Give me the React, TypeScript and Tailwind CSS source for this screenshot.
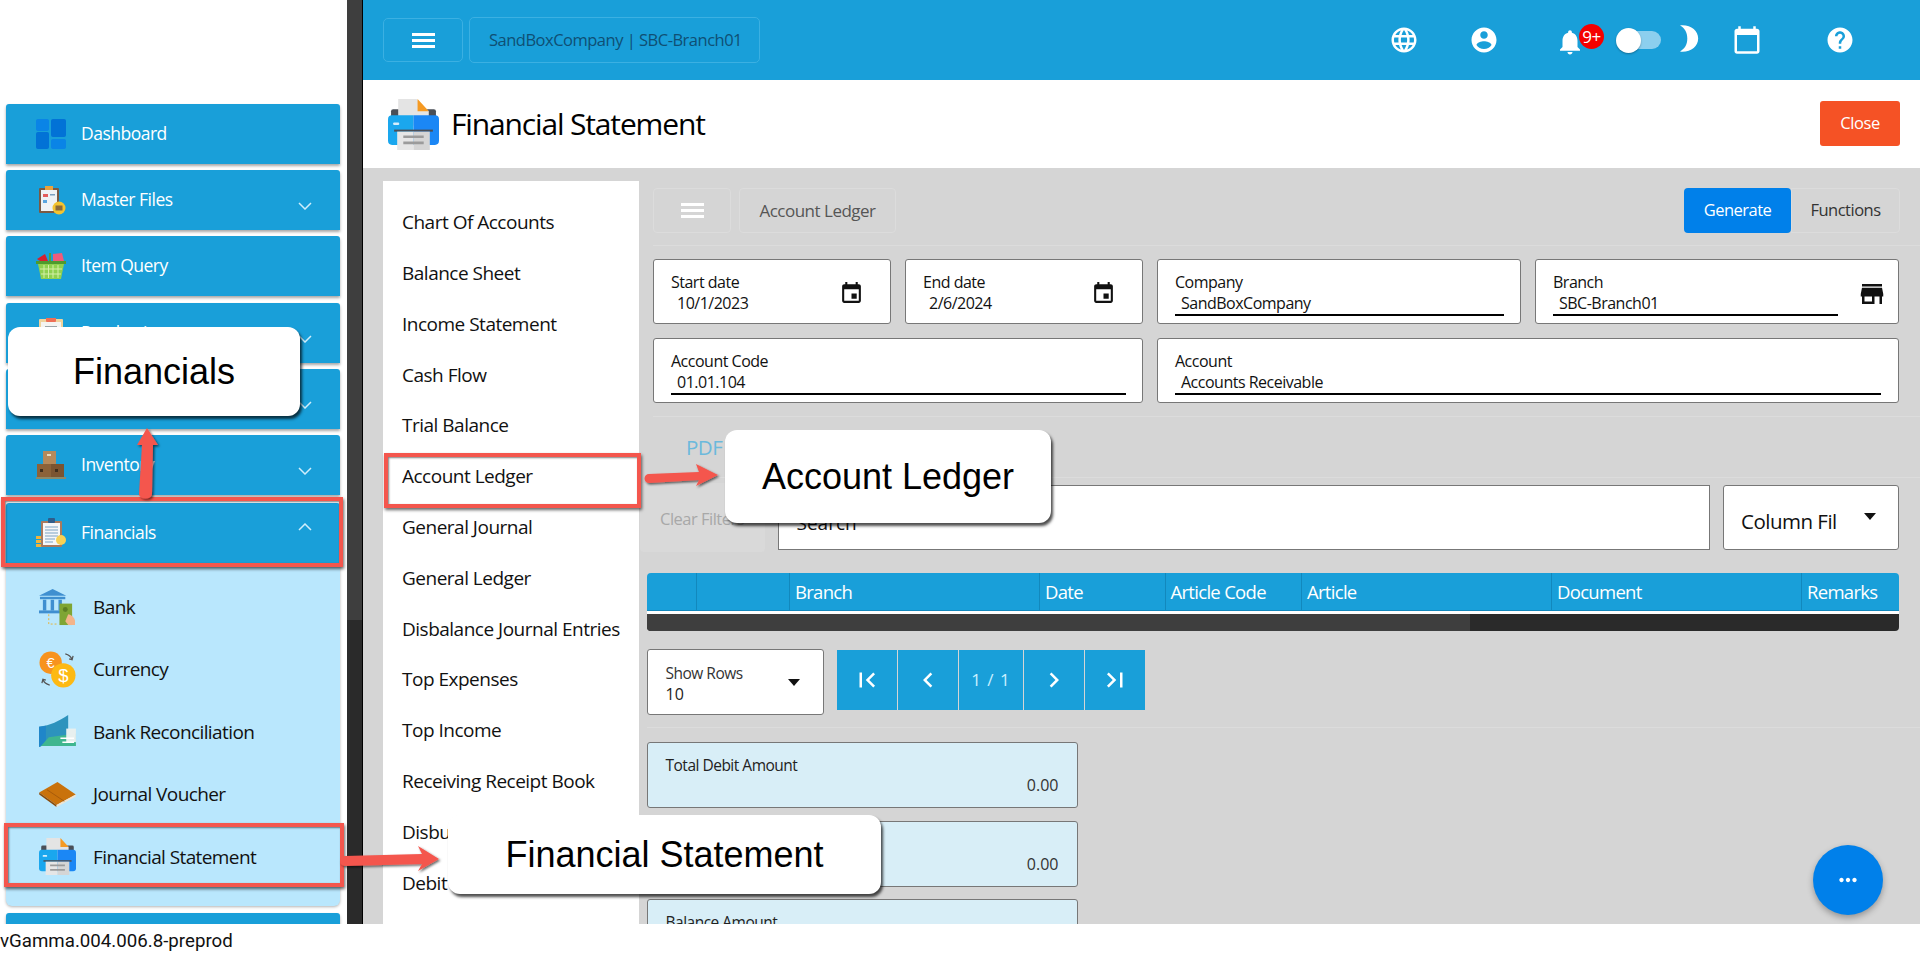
import type { ReactNode } from "react";

const FONT = "font-['Open_Sans',sans-serif]";

function Mi({ d, className = "" }: { d: string; className?: string }) {
  return (
    <svg viewBox="0 0 24 24" fill="currentColor" className={className}>
      <path d={d} />
    </svg>
  );
}

const P = {
  globe: "M11.99 2C6.47 2 2 6.48 2 12s4.47 10 9.99 10C17.52 22 22 17.52 22 12S17.52 2 11.99 2zm6.93 6h-2.95c-.32-1.25-.78-2.45-1.38-3.56 1.84.63 3.37 1.91 4.33 3.56zM12 4.04c.83 1.2 1.48 2.53 1.91 3.96h-3.82c.43-1.43 1.08-2.76 1.91-3.96zM4.26 14C4.1 13.36 4 12.69 4 12s.1-1.36.26-2h3.38c-.08.66-.14 1.32-.14 2 0 .68.06 1.34.14 2H4.26zm.82 2h2.95c.32 1.25.78 2.45 1.38 3.56-1.84-.63-3.37-1.9-4.33-3.56zm2.95-8H5.08c.96-1.66 2.49-2.93 4.33-3.56C8.81 5.55 8.35 6.75 8.03 8zM12 19.96c-.83-1.2-1.48-2.53-1.91-3.96h3.82c-.43 1.43-1.08 2.76-1.91 3.96zM14.34 14H9.66c-.09-.66-.16-1.32-.16-2 0-.68.07-1.35.16-2h4.68c.09.65.16 1.32.16 2 0 .68-.07 1.34-.16 2zm.25 5.56c.6-1.11 1.06-2.31 1.38-3.56h2.95c-.96 1.65-2.49 2.93-4.33 3.56zM16.36 14c.08-.66.14-1.32.14-2 0-.68-.06-1.34-.14-2h3.38c.16.64.26 1.31.26 2s-.1 1.36-.26 2h-3.38z",
  account: "M12 2C6.48 2 2 6.48 2 12s4.48 10 10 10 10-4.48 10-10S17.52 2 12 2zm0 3c1.66 0 3 1.34 3 3s-1.34 3-3 3-3-1.34-3-3 1.34-3 3-3zm0 14.2c-2.5 0-4.71-1.28-6-3.22.03-1.99 4-3.08 6-3.08 1.99 0 5.97 1.09 6 3.08-1.29 1.94-3.5 3.22-6 3.22z",
  bell: "M12 22c1.1 0 2-.9 2-2h-4c0 1.1.89 2 2 2zm6-6v-5c0-3.07-1.64-5.64-4.5-6.32V4c0-.83-.67-1.5-1.5-1.5s-1.5.67-1.5 1.5v.68C7.63 5.36 6 7.92 6 11v5l-2 2v1h16v-1l-2-2z",
  help: "M12 2C6.48 2 2 6.48 2 12s4.48 10 10 10 10-4.48 10-10S17.52 2 12 2zm1 17h-2v-2h2v2zm2.07-7.75l-.9.92C13.45 12.9 13 13.5 13 15h-2v-.5c0-1.1.45-2.1 1.17-2.83l1.24-1.26c.37-.36.59-.86.59-1.41 0-1.1-.9-2-2-2s-2 .9-2 2H8c0-2.21 1.79-4 4-4s4 1.79 4 4c0 .88-.36 1.68-.93 2.25z",
  calendar: "M20 3h-1V1h-2v2H7V1H5v2H4c-1.1 0-2 .9-2 2v16c0 1.1.9 2 2 2h16c1.1 0 2-.9 2-2V5c0-1.1-.9-2-2-2zm0 18H4V8h16v13z",
  event: "M17 12h-5v5h5v-5zM16 1v2H8V1H6v2H5c-1.11 0-1.99.9-1.99 2L3 19c0 1.1.89 2 2 2h14c1.1 0 2-.9 2-2V5c0-1.1-.9-2-2-2h-1V1h-2zm3 18H5V8h14v11z",
  store: "M20 4H4v2h16V4zm1 10v-2l-1-5H4l-1 5v2h1v6h10v-6h4v6h2v-6h1zm-9 4H6v-4h6v4z",
  first: "M18.41 16.59L13.82 12l4.59-4.59L17 6l-6 6 6 6zM6 6h2v12H6z",
  last: "M5.59 7.41L10.18 12l-4.59 4.59L7 18l6-6-6-6zM16 6h2v12h-2z",
  prev: "M15.41 7.41L14 6l-6 6 6 6 1.41-1.41L10.83 12z",
  next: "M10 6L8.59 7.41 13.17 12l-4.58 4.59L10 18l6-6z",
  dots: "M6 10c-1.1 0-2 .9-2 2s.9 2 2 2 2-.9 2-2-.9-2-2-2zm12 0c-1.1 0-2 .9-2 2s.9 2 2 2 2-.9 2-2-.9-2-2-2zm-6 0c-1.1 0-2 .9-2 2s.9 2 2 2 2-.9 2-2-.9-2-2-2z",
  moon: "M7 1c7.500 0 13 4.800 13 11s-5.500 11-13 11c-.8 0-1.500-.1-2-.3 4-2.200 6-5.800 6-10.700S9 3.500 5 1.300C5.500 1.100 6.200 1 7 1z",
};

function Burger({ className = "" }: { className?: string }) {
  return (
    <div className={`flex flex-col gap-[3px] w-[23px] ${className}`}>
      <div className="h-[3px] bg-white" />
      <div className="h-[3px] bg-white" />
      <div className="h-[3px] bg-white" />
    </div>
  );
}

function DashIcon() {
  return (
    <svg viewBox="0 0 30 30" className="w-[30px] h-[30px]">
      <rect x="0" y="0" width="13" height="12" rx="2" fill="#0a84e6" />
      <rect x="15" y="0" width="15" height="18" rx="2" fill="#0272d6" />
      <rect x="0" y="13" width="13" height="17" rx="2" fill="#0272d6" />
      <rect x="15" y="20" width="15" height="10" rx="2" fill="#0a84e6" />
    </svg>
  );
}

function MasterIcon() {
  return (
    <svg viewBox="0 0 30 30" className="w-[30px] h-[30px]">
      <rect x="3" y="3" width="20" height="25" rx="1" fill="#7a5a44" />
      <rect x="5" y="5" width="16" height="21" fill="#eef2f5" />
      <rect x="9" y="1" width="8" height="4" fill="#e9a23b" />
      <rect x="7" y="9" width="5" height="3" fill="#e35d5d" />
      <rect x="14" y="9" width="5" height="1.500" fill="#7aa0c0" />
      <rect x="7" y="15" width="4" height="3" fill="#59a5df" />
      <circle cx="23" cy="23" r="6.500" fill="#f4c430" />
      <rect x="19.500" y="20.500" width="7" height="5" fill="#8a6a3a" />
    </svg>
  );
}

function PurchIcon() {
  return (
    <svg viewBox="0 0 30 30" className="w-[30px] h-[30px]">
      <rect x="3" y="1" width="24" height="29" rx="1" fill="#f0d39c" />
      <rect x="5" y="4" width="20" height="24" fill="#f4f4f2" />
      <rect x="10" y="-1" width="10" height="5" rx="1" fill="#ee6f57" />
      <path d="M9 9h12M9 13h12M9 17h12M9 21h8" stroke="#7e8a90" strokeWidth="1.500" />
    </svg>
  );
}

function BasketIcon() {
  return (
    <svg viewBox="0 0 30 30" className="w-[30px] h-[30px]">
      <path d="M1 8l8-5 3 7H4z" fill="#d6202f" />
      <path d="M17 3l9-1 2 8H17z" fill="#ef5b7b" />
      <rect x="13" y="2" width="2" height="9" fill="#5a9a3a" />
      <rect x="0" y="10" width="30" height="3" fill="#4e9a2e" />
      <path d="M2 13h26l-3 15H5z" fill="#8fd14f" />
      <path d="M8 14v13M12.500 14v13M17 14v13M22 14v13M4 18h22M5 23h20" stroke="#d4efa8" strokeWidth="1" />
    </svg>
  );
}

function BoxIcon() {
  return (
    <svg viewBox="0 0 30 30" className="w-[30px] h-[30px]">
      <rect x="7" y="1" width="13" height="13" fill="#b58a5c" />
      <rect x="1" y="14" width="14" height="13" fill="#8c6239" />
      <rect x="15" y="14" width="13" height="13" fill="#7b5431" />
      <rect x="0" y="27" width="30" height="2" fill="#8c8a6a" />
      <rect x="11" y="4" width="4" height="2" fill="#e8dcc0" />
      <rect x="4" y="19" width="3" height="3" fill="#3f2d1c" />
      <rect x="19" y="19" width="3" height="3" fill="#3f2d1c" />
    </svg>
  );
}

function ClipboardIcon() {
  return (
    <svg viewBox="0 0 30 30" className="w-[30px] h-[30px]">
      <rect x="0" y="18" width="6" height="3" fill="#f0b43c" />
      <rect x="0" y="22" width="6" height="3" fill="#f0b43c" />
      <rect x="0" y="26" width="6" height="3" fill="#f0b43c" />
      <rect x="5" y="3" width="21" height="26" rx="1" fill="#a97a5e" />
      <rect x="7" y="5" width="17" height="22" fill="#f5f7f9" />
      <rect x="12" y="0" width="7" height="5" rx="1" fill="#2f5d8a" />
      <path d="M9 9h13M9 12h13M9 15h13M9 18h13M9 21h10M9 24h8" stroke="#7da3c4" strokeWidth="1.200" />
      <circle cx="25" cy="22" r="5" fill="#f7d154" />
    </svg>
  );
}

function BankIcon() {
  return (
    <svg viewBox="0 0 38 38" className="w-[37px] h-[37px]">
      <path d="M14 0L28 7H0z" fill="#3f8fd0" />
      <rect x="1" y="8" width="26" height="2.500" fill="#3f8fd0" />
      <path d="M4 11h3.500v11H4zM12 11h3.500v11H12zM20 11h3.500v11H20z" fill="#3f8fd0" />
      <rect x="0" y="22" width="27" height="3" fill="#3f8fd0" />
      <path d="M10 26v10h10" stroke="#e7b53c" strokeWidth="1" strokeDasharray="2 2" fill="none" />
      <rect x="21" y="15" width="13" height="22" fill="#7fa534" />
      <circle cx="27" cy="21" r="2.500" fill="#5d7f25" />
      <path d="M30 26c3 0 7 4 7 7v4h-7l-3-4z" fill="#f3b48a" />
    </svg>
  );
}

function CurrencyIcon() {
  return (
    <svg viewBox="0 0 38 38" className="w-[37px] h-[37px]">
      <circle cx="12" cy="12" r="11.500" fill="#f7931e" />
      <circle cx="25" cy="25" r="12.500" fill="#fdb913" />
      <text x="12" y="17" textAnchor="middle" fontSize="15" fill="#fff" fontFamily="Liberation Sans">€</text>
      <text x="25" y="32" textAnchor="middle" fontSize="19" fill="#fff" fontFamily="Liberation Sans">$</text>
      <path d="M27 3c4 1 6 3 7 6M31 8l3 1 1-4M11 35c-4-1-6-3-7-6M7 30l-3-1-1 4" stroke="#555" strokeWidth="1.300" fill="none" />
    </svg>
  );
}

function ReconIcon() {
  return (
    <svg viewBox="0 0 38 34" className="w-[37px] h-[33px]">
      <path d="M0 12c12-1 20-6 30-12v21c-10 4-20 8-30 12z" fill="#2d93bd" />
      <path d="M0 12c4 0 6-1 7-1v19l-7 3z" fill="#1f86c9" />
      <path d="M10 23l28-4v13H2z" fill="#3fb68f" />
      <rect x="28" y="14" width="10" height="14" fill="#e8f0ef" />
      <path d="M22 24h14M24 28h12" stroke="#fff" strokeWidth="1.500" />
    </svg>
  );
}

function BookIcon() {
  return (
    <svg viewBox="0 0 38 26" className="w-[37px] h-[25px]">
      <path d="M0 11L19 0l19 13-20 11z" fill="#c9720c" />
      <path d="M0 11l18 13v2L0 13z" fill="#8a4a08" />
      <path d="M18 24l20-11v2L18 26z" fill="#f0e4d0" />
      <path d="M8 8l18 12" stroke="#a55a0a" strokeWidth="1" />
    </svg>
  );
}

function PrinterIcon({ className = "" }: { className?: string }) {
  return (
    <svg viewBox="0 0 50 50" className={className}>
      <path d="M3 24V12a2 2 0 012-2h40a2 2 0 012 2v12z" fill="#4a4f57" />
      <path d="M10 0h18l12 12v14H10z" fill="#e4e4e4" />
      <path d="M29 0l11 12H29z" fill="#f59a23" />
      <path d="M4 16h21v29H4a4 4 0 01-4-4V20a4 4 0 014-4z" fill="#1aa7ee" />
      <path d="M25 16h21a4 4 0 014 4v21a4 4 0 01-4 4H25z" fill="#1b87f5" />
      <rect x="6" y="30" width="38" height="2" fill="#4a4f57" />
      <rect x="5" y="23" width="6" height="2.500" rx="1" fill="#d5eefc" />
      <rect x="9" y="32" width="16" height="18" fill="#e6e6e6" />
      <rect x="25" y="32" width="16" height="18" fill="#d5d5d5" />
      <path d="M15 37h20M15 43h20" stroke="#9b9b9b" strokeWidth="2.500" />
    </svg>
  );
}

function NavItem({ label, icon, chevron, className = "" }: { label: string; icon?: ReactNode; chevron?: "up" | "down"; className?: string }) {
  return (
    <div className={`h-[60px] shrink-0 bg-[#199fd9] rounded-t-[3px] shadow-[0_2px_3px_rgba(0,0,0,0.35)] flex items-center ml-[6px] w-[334px] relative ${className}`}>
      <div className="w-[30px] h-[30px] ml-[30px] mr-[15px] flex items-center justify-center">{icon}</div>
      <span className="text-[17.500px] text-white tracking-[-0.5px] pb-[2px]">{label}</span>
      {chevron === "down" && (
        <svg viewBox="0 0 14 8" className="absolute right-[28px] top-[32px] w-[14px] h-[8px]" fill="none" stroke="#cfeefc" strokeWidth="1.500"><path d="M1 1l6 6 6-6" /></svg>
      )}
      {chevron === "up" && (
        <svg viewBox="0 0 14 8" className="absolute right-[28px] top-[20px] w-[14px] h-[8px]" fill="none" stroke="#cfeefc" strokeWidth="1.500"><path d="M1 7l6-6 6 6" /></svg>
      )}
    </div>
  );
}

function SubItem({ label, icon }: { label: string; icon: ReactNode }) {
  return (
    <div className="h-[62.400px] flex items-center pl-[33px]">
      <div className="w-[37px] flex justify-center">{icon}</div>
      <span className="ml-[17px] text-[19px] text-[#111] tracking-[-0.6px]">{label}</span>
    </div>
  );
}

function Field({ label, value, w, icon, iconClass = "right-[26px] top-[21px] w-[25px] h-[25px]", line, lineW }: { label: string; value: string; w: string; icon?: string; iconClass?: string; line?: boolean; lineW?: string }) {
  return (
    <div className={`${w} h-[65px] bg-white border border-[#777] rounded-[3px] relative pl-[17px] pt-[12px] shrink-0`}>
      <div className="text-[16px] leading-[21px] text-[#111] tracking-[-0.5px]">{label}</div>
      <div className={`text-[16px] leading-[20px] text-[#111] pl-[6px] tracking-[-0.5px] ${line ? `border-b-2 border-black pb-[1px] ${lineW}` : ""}`}>{value}</div>
      {icon && <Mi d={icon} className={`absolute text-[#111] ${iconClass}`} />}
    </div>
  );
}

const MENU = [
  "Chart Of Accounts",
  "Balance Sheet",
  "Income Statement",
  "Cash Flow",
  "Trial Balance",
  "Account Ledger",
  "General Journal",
  "General Ledger",
  "Disbalance Journal Entries",
  "Top Expenses",
  "Top Income",
  "Receiving Receipt Book",
  "Disbursement Book",
  "Debit Memo Book",
  "Sales Service Book",
];

const COLS = [
  { w: "w-[49px]", t: "" },
  { w: "w-[93px]", t: "" },
  { w: "w-[250px]", t: "Branch" },
  { w: "w-[125.500px]", t: "Date" },
  { w: "w-[136.500px]", t: "Article Code" },
  { w: "w-[250px]", t: "Article" },
  { w: "w-[250px]", t: "Document" },
  { w: "flex-1", t: "Remarks" },
];

function Amount({ label, className = "" }: { label: string; className?: string }) {
  return (
    <div className={`w-[431px] h-[66px] shrink-0 bg-[#d8eef7] border border-[#777] rounded-[3px] pl-[18px] pr-[18px] pt-[12px] ${className}`}>
      <div className="text-[15.500px] leading-[21px] text-[#222] tracking-[-0.5px]">{label}</div>
      <div className="text-[16px] leading-[21px] -mt-[1px] text-right text-[#333]">0.00</div>
    </div>
  );
}

function PageCell({ w, children }: { w: string; children: ReactNode }) {
  return <div className={`${w} h-[60px] bg-[#199fd9] text-white flex items-center justify-center`}>{children}</div>;
}

function Callout({ text, className }: { text: string; className: string }) {
  return (
    <div className={`absolute bg-white rounded-[12px] shadow-[2px_3px_3px_rgba(0,0,0,0.7)] flex items-center justify-center font-['Liberation_Sans',sans-serif] text-[36px] text-black z-30 ${className}`}>
      {text}
    </div>
  );
}

function RedBox({ className }: { className: string }) {
  return <div className={`absolute border-[4.500px] border-[#f4564d] shadow-[1px_2px_3px_rgba(0,0,0,0.6),inset_1px_1px_2px_rgba(0,0,0,0.5)] z-20 ${className}`} />;
}

export default function App() {
  return (
    <div className={`relative w-[1920px] h-[953px] overflow-hidden bg-white ${FONT}`}>
      <div className="flex h-[924px] overflow-hidden">
        {/* sidebar */}
        <aside className="w-[347px] shrink-0 pt-[104px] flex flex-col gap-[6px] bg-white">
          <NavItem label="Dashboard" icon={<DashIcon />} />
          <NavItem label="Master Files" icon={<MasterIcon />} chevron="down" />
          <NavItem label="Item Query" icon={<BasketIcon />} />
          <NavItem label="Purchasing" icon={<PurchIcon />} chevron="down" className="mt-px" />
          <NavItem label="Sales" icon={<MasterIcon />} chevron="down" />
          <NavItem label="Inventory" icon={<BoxIcon />} chevron="down" />
          <div className="flex flex-col mt-[2px]">
            <NavItem label="Financials" icon={<ClipboardIcon />} chevron="up" />
            <div className="ml-[6px] w-[334px] h-[343px] bg-[#b9e7fd] rounded-b-[6px] shadow-[0_1px_3px_rgba(0,0,0,0.3)] pt-[13px]">
              <SubItem label="Bank" icon={<BankIcon />} />
              <SubItem label="Currency" icon={<CurrencyIcon />} />
              <SubItem label="Bank Reconciliation" icon={<ReconIcon />} />
              <SubItem label="Journal Voucher" icon={<BookIcon />} />
              <SubItem label="Financial Statement" icon={<PrinterIcon className="w-[37px] h-[37px]" />} />
            </div>
          </div>
          <NavItem label="" className="mt-px" />
        </aside>

        {/* page scrollbar */}
        <div className="w-[16px] shrink-0 bg-[#2a2a2a] border-r border-black flex flex-col">
          <div className="h-[620px] bg-[#3e3e3e]" />
        </div>

        <main className="flex-1 min-w-0 flex flex-col">
          <header className="h-[80px] shrink-0 bg-[#199fd9] flex items-center pl-[20px] relative">
            <div className="w-[80px] h-[44px] rounded-[5px] border border-[#3bb0e2] flex items-center justify-center">
              <Burger />
            </div>
            <div className="ml-[6px] w-[291px] h-[46px] rounded-[5px] border border-[#3bb0e2] flex items-center pl-[19px] text-[16.500px] text-[#0f4f74] tracking-[-0.5px]">
              SandBoxCompany | SBC-Branch01
            </div>
            <Mi d={P.globe} className="absolute left-[1026px] top-[25px] w-[30px] h-[30px] text-white" />
            <Mi d={P.account} className="absolute left-[1106px] top-[25px] w-[30px] h-[30px] text-white" />
            <Mi d={P.bell} className="absolute left-[1192px] top-[27px] w-[30px] h-[30px] text-white" />
            <div className="absolute left-[1216px] top-[24px] w-[25px] h-[25px] rounded-full bg-[#f50000] text-white text-[17px] tracking-[-0.5px] flex items-center justify-center">9+</div>
            <div className="absolute left-[1263px] top-[31px] w-[35px] h-[18px] rounded-full bg-[#8ccfee]" />
            <div className="absolute left-[1253px] top-[28px] w-[25px] h-[25px] rounded-full bg-white shadow-[0_1px_2px_rgba(0,0,0,0.3)]" />
            <Mi d={P.moon} className="absolute left-[1311px] top-[24px] w-[29px] h-[29px] text-white" />
            <Mi d={P.calendar} className="absolute left-[1369px] top-[25px] w-[30px] h-[30px] text-white" />
            <Mi d={P.help} className="absolute left-[1462px] top-[25px] w-[30px] h-[30px] text-white" />
          </header>

          <div className="h-[88px] shrink-0 bg-white flex items-center pl-[25px] pr-[20px]">
            <PrinterIcon className="w-[51px] h-[51px]" />
            <h1 className="ml-[12px] mt-[-2px] text-[30px] text-black tracking-[-1.15px]">Financial Statement</h1>
            <button className="ml-auto mt-[-1px] w-[80px] h-[45px] rounded-[3px] bg-[#f55225] text-white text-[16.500px] tracking-[-0.4px]">Close</button>
          </div>

          <div className="flex-1 min-h-0 bg-[#d5d5d5] flex pl-[20px] pt-[13px]">
            <nav className="w-[256px] shrink-0 bg-white pt-[16px] h-[800px]">
              {MENU.map((m) => (
                <div key={m} className="h-[50.800px] flex items-center pl-[19px] text-[19px] text-[#111] tracking-[-0.5px] whitespace-nowrap">{m}</div>
              ))}
            </nav>

            <section className="flex-1 min-w-0 pl-[14px]">
              {/* toolbar */}
              <div className="flex items-start h-[65px] pt-[7px] pr-[20px] border-b border-[#dcdcdc]">
                <div className="w-[78px] h-[45px] rounded-[4px] border border-[#dcdcdc] flex items-center justify-center">
                  <Burger />
                </div>
                <div className="ml-[8px] w-[157px] h-[45px] rounded-[4px] border border-[#dcdcdc] flex items-center justify-center text-[17px] text-[#555] tracking-[-0.5px]">Account Ledger</div>
                <button className="ml-auto w-[107px] h-[45px] rounded-[4px] bg-[#0080ea] text-white text-[16.500px] tracking-[-0.5px]">Generate</button>
                <button className="w-[109px] h-[45px] rounded-r-[4px] border border-[#dcdcdc] text-[#333] text-[16.500px] tracking-[-0.5px]">Functions</button>
              </div>

              {/* filters */}
              <div className="pt-[13px] pr-[21px] flex flex-col gap-[14px] h-[171px] border-b border-[#dcdcdc]">
                <div className="flex gap-[14px]">
                  <Field label="Start date" value="10/1/2023" w="w-[238px]" icon={P.event} />
                  <Field label="End date" value="2/6/2024" w="w-[238px]" icon={P.event} />
                  <Field label="Company" value="SandBoxCompany" w="w-[364px]" line lineW="w-[329px]" />
                  <Field label="Branch" value="SBC-Branch01" w="w-[364px]" icon={P.store} iconClass="right-[11px] top-[19px] w-[30px] h-[30px]" line lineW="w-[285px]" />
                </div>
                <div className="flex gap-[14px]">
                  <Field label="Account Code" value="01.01.104" w="w-[490px]" line lineW="w-[455px]" />
                  <Field label="Account" value="Accounts Receivable" w="w-[742px]" line lineW="w-[706px]" />
                </div>
              </div>

              {/* export */}
              <div className="h-[61px] border-b border-[#dcdcdc] pl-[33px] flex items-center text-[20.500px] text-[#6bb9dc] tracking-[-0.5px]">PDF</div>

              {/* search */}
              <div className="flex items-start h-[95px] pr-[21px] pt-[7px] -ml-[13px]">
                <button className="w-[125px] h-[69px] -mt-[2px] pt-[4px] rounded-[4px] bg-[#d9d9d9] text-[#a8a8a8] text-[16.500px] tracking-[-0.5px] pl-[20px] text-left whitespace-nowrap overflow-hidden">Clear Filters</button>
                <div className="ml-[12.500px] w-[932px] h-[65px] bg-white border border-[#777] flex items-center pl-[18px] text-[19px] text-[#111] pt-[11px]">Search</div>
                <div className="ml-[13.500px] w-[176px] h-[65px] bg-white border border-[#777] rounded-[3px] flex items-center pl-[17px] text-[20.500px] text-[#111] relative tracking-[-0.5px] pt-[8px]">
                  Column Fil
                  <div className="absolute right-[22px] top-[27px] w-0 h-0 border-x-[6px] border-x-transparent border-t-[7px] border-t-[#111]" />
                </div>
              </div>

              {/* table */}
              <div className="-ml-[6px] mr-[21px] rounded-[4px] overflow-hidden">
                <div className="flex h-[38px] bg-[#199fd9] border-b border-[#1288bd]">
                  {COLS.map((c, i) => (
                    <div key={i} className={`${c.w} ${i > 0 ? "border-l border-[#1288bd]" : ""} flex items-center pl-[5px] pt-[1px] text-white text-[18.500px] tracking-[-0.7px] font-medium`}>{c.t}</div>
                  ))}
                </div>
                <div className="h-[3px] bg-white" />
                <div className="h-[17px] bg-[#2a2a2a]">
                  <div className="h-full w-[823px] bg-[#3e3e3e]" />
                </div>
              </div>

              {/* pager */}
              <div className="flex h-[97px] pt-[18px] -ml-[6.500px] border-b border-[#dcdcdc]">
                <div className="w-[177px] h-[66px] bg-white border border-[#777] rounded-[3px] pl-[18px] pt-[13px] relative shrink-0">
                  <div className="text-[15.500px] leading-[21px] text-[#333] tracking-[-0.5px]">Show Rows</div>
                  <div className="text-[16px] leading-[20px] text-[#222]">10</div>
                  <div className="absolute right-[23px] top-[29px] w-0 h-0 border-x-[6px] border-x-transparent border-t-[7px] border-t-[#111]" />
                </div>
                <div className="ml-[13.500px] flex gap-px h-[60px] mt-px">
                  <PageCell w="w-[60px]"><Mi d={P.first} className="w-[30px] h-[30px]" /></PageCell>
                  <PageCell w="w-[60px]"><Mi d={P.prev} className="w-[30px] h-[30px]" /></PageCell>
                  <PageCell w="w-[64px]"><span className="text-[17px] text-[#c9f0ff] tracking-[1px]">1 / 1</span></PageCell>
                  <PageCell w="w-[60px]"><Mi d={P.next} className="w-[30px] h-[30px]" /></PageCell>
                  <PageCell w="w-[60px]"><Mi d={P.last} className="w-[30px] h-[30px]" /></PageCell>
                </div>
              </div>

              {/* totals */}
              <div className="-ml-[6.500px] pt-[14px] flex flex-col gap-[12.500px]">
                <Amount label="Total Debit Amount" />
                <Amount label="Total Credit Amount" />
                <Amount label="Balance Amount" />
              </div>
            </section>
          </div>
        </main>
      </div>

      <div className="h-[29px] pt-[6px] pl-0 font-['Roboto',sans-serif] text-[18.700px] leading-[22px] text-[#111]">vGamma.004.006.8-preprod</div>

      {/* floating action */}
      <div className="absolute left-[1813px] top-[845px] w-[70px] h-[70px] rounded-full bg-[#0080ea] shadow-[0_3px_6px_rgba(0,0,0,0.3)] flex items-center justify-center z-30">
        <Mi d={P.dots} className="w-[26px] h-[26px] text-white" />
      </div>

      {/* tutorial annotations */}
      <RedBox className="left-[1px] top-[497px] w-[342px] h-[70px]" />
      <RedBox className="left-[4px] top-[823px] w-[340px] h-[64px]" />
      <RedBox className="left-[384px] top-[453px] w-[257px] h-[55px]" />

      <svg viewBox="0 0 1920 953" className="absolute left-0 top-0 w-[1920px] h-[953px] z-20 pointer-events-none">
        <defs>
          <filter id="arrowShadow" x="-20%" y="-20%" width="140%" height="140%">
            <feDropShadow dx="1.500" dy="1.500" stdDeviation="1.200" floodColor="#000" floodOpacity="0.6" />
          </filter>
        </defs>
        <g fill="#f4564d" filter="url(#arrowShadow)">
          <path d="M139 494l3-49h-5l10-17 11 17h-5l-1 49a6.500 4.500 0 01-13 0z" />
          <path d="M345 856l77-2-4-8 21 13-21 12 4-7-77 2a5 5 0 010-10z" />
          <path d="M649 474l50-2-3-8 22 11-22 11 3-6-50 3a4.500 4.500 0 010-9z" />
        </g>
      </svg>

      <Callout text="Financials" className="left-[8px] top-[327px] w-[292px] h-[89px]" />
      <Callout text="Account Ledger" className="left-[725px] top-[430px] w-[326px] h-[93px]" />
      <Callout text="Financial Statement" className="left-[448px] top-[815px] w-[433px] h-[79px]" />
    </div>
  );
}
